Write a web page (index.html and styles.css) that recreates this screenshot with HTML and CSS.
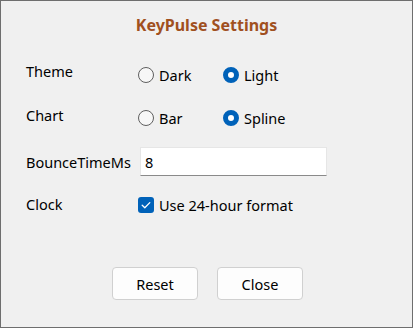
FILE: index.html
```html
<!DOCTYPE html>
<html>
<head>
<meta charset="utf-8">
<link rel="stylesheet" href="styles.css">
</head>
<body>
<div class="window">
  <h1 class="title">KeyPulse Settings</h1>
  <div class="form">
    <div class="row row-radio">
      <span class="label">Theme</span>
      <div class="controls">
        <label class="radio"><span class="dot"></span>Dark</label>
        <label class="radio"><span class="dot on"></span>Light</label>
      </div>
    </div>
    <div class="row row-radio2">
      <span class="label">Chart</span>
      <div class="controls">
        <label class="radio"><span class="dot"></span>Bar</label>
        <label class="radio"><span class="dot on"></span>Spline</label>
      </div>
    </div>
    <div class="row">
      <span class="label">BounceTimeMs</span>
      <div class="controls">
        <div class="textbox">8</div>
      </div>
    </div>
    <div class="row row-check">
      <span class="label">Clock</span>
      <div class="controls">
        <label class="check"><span class="box"><svg width="16" height="16" viewBox="0 0 16 16"><path d="M4.2 8.3 L6.8 10.8 L11.8 5.6" fill="none" stroke="#fff" stroke-width="1.3" stroke-linecap="round" stroke-linejoin="round"/></svg></span>Use 24-hour format</label>
      </div>
    </div>
  </div>
  <div class="buttons">
    <button class="btn">Reset</button>
    <button class="btn">Close</button>
  </div>
</div>
</body>
</html>
```
FILE: styles.css
```css
html, body {
  margin: 0;
  padding: 0;
}
body {
  font-family: "Noto Sans", "Open Sans", sans-serif;
  font-size: 14.5px;
  color: #000;
}
.window {
  width: 413px;
  height: 328px;
  box-sizing: border-box;
  border: 1px solid #6e6e6e;
  background: #f0f0f0;
  display: flex;
  flex-direction: column;
}
.title {
  margin: 0;
  padding-top: 14px;
  height: 38px;
  box-sizing: border-box;
  text-align: center;
  font-size: 16px;
  font-weight: bold;
  line-height: 20px;
  color: #a0501f;
}
.form {
  margin-top: 14px;
  padding-left: 25px;
}
.row {
  height: 43.5px;
  display: flex;
  align-items: center;
}
.label {
  width: 112px;
  line-height: 20px;
}
.row-radio .label { margin-bottom: 7px; }
.row-radio2 .label { margin-bottom: 6px; }
.row-check .label { margin-bottom: 2px; }
.controls {
  display: flex;
  align-items: center;
}
.radio {
  display: flex;
  align-items: center;
  width: 85px;
  line-height: 20px;
}
.dot {
  width: 16px;
  height: 16px;
  box-sizing: border-box;
  border: 1px solid #5f5f5f;
  border-radius: 50%;
  margin-right: 5px;
  background: #f7f7f7;
}
.dot.on {
  border: 5px solid #0062b9;
  background: #fff;
}
.textbox {
  width: 187px;
  height: 29px;
  box-sizing: border-box;
  background: #fff;
  border: 1px solid #e6e6e6;
  border-bottom: 1px solid #8a8a8a;
  padding: 3px 4px 0 4px;
  line-height: 22px;
  margin-left: 2px;
}
.check {
  display: flex;
  align-items: center;
  line-height: 20px;
}
.box {
  width: 16px;
  height: 16px;
  border-radius: 3px;
  background: #0062b9;
  margin-right: 5px;
  display: flex;
}
.buttons {
  margin-top: auto;
  margin-bottom: 27px;
  padding-left: 2px;
  display: flex;
  justify-content: center;
  gap: 19px;
}
.btn {
  width: 86px;
  height: 33px;
  background: #fdfdfd;
  border: 1px solid #d0d0d0;
  border-radius: 4px;
  font-family: "Noto Sans", "Open Sans", sans-serif;
  font-size: 14.5px;
  color: #000;
  padding: 0;
}
```
